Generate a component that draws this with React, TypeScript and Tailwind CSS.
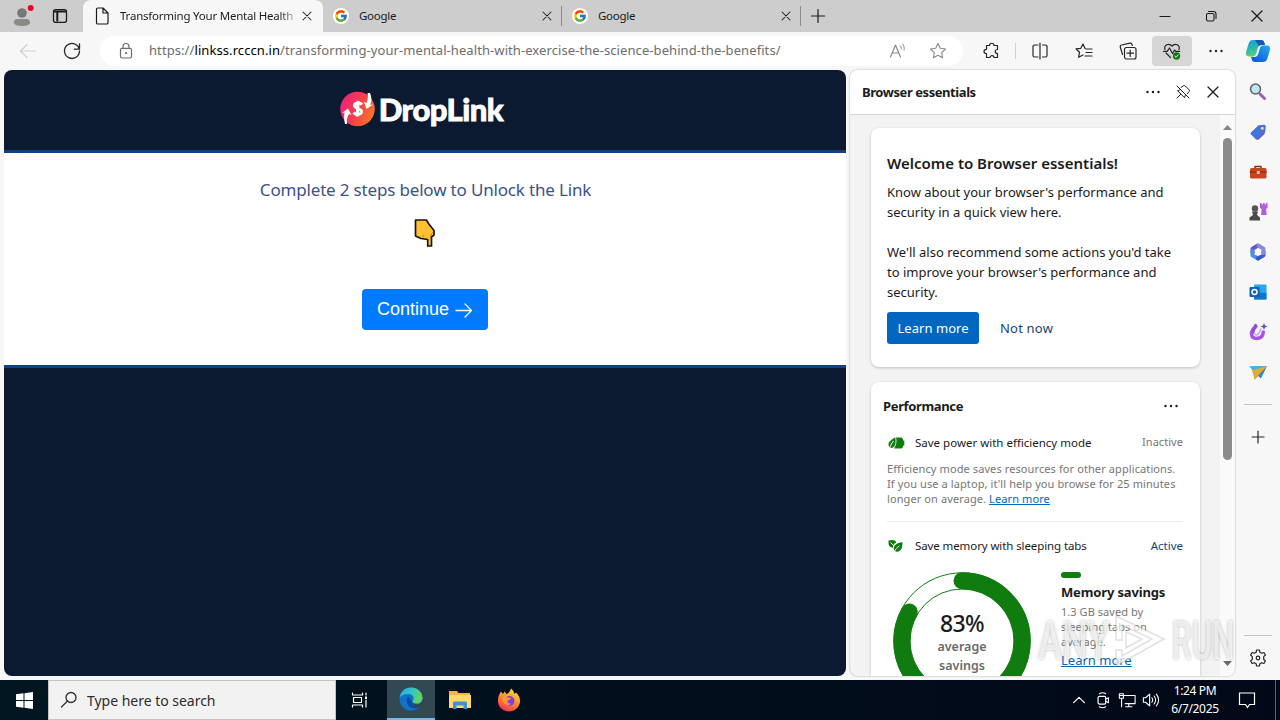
import type { ReactNode } from "react";
import { FcGoogle } from "react-icons/fc";

type IconProps = { size?: number; className?: string; children: ReactNode };

function Icon({ size = 20, className = "", children }: IconProps) {
  return (
    <svg
      width={size}
      height={size}
      viewBox="0 0 20 20"
      fill="none"
      stroke="currentColor"
      strokeLinecap="round"
      strokeLinejoin="round"
      className={`shrink-0 ${className}`}
    >
      {children}
    </svg>
  );
}

function Close({ size = 20 }: { size?: number }) {
  return (
    <Icon size={size}>
      <path d="M5 5l10 10M15 5L5 15" strokeWidth="1.3" />
    </Icon>
  );
}

function Dots() {
  return (
    <Icon>
      <g fill="currentColor" stroke="none">
        <circle cx="4.5" cy="10" r="1.2" />
        <circle cx="10" cy="10" r="1.2" />
        <circle cx="15.5" cy="10" r="1.2" />
      </g>
    </Icon>
  );
}

function GoogleTab() {
  return (
    <div className="flex h-8 w-[239px] shrink-0 items-center pl-[10px]">
      <span className="flex size-4 items-center justify-center rounded-full bg-white">
        <FcGoogle size={14} />
      </span>
      <span className="ml-[10px] w-[180px] text-[11.5px] tracking-[-0.25px]">Google</span>
      <Close size={16} />
      <span className="ml-[6px] h-5 w-px bg-[#8c8c8c]" />
    </div>
  );
}

function TabBar() {
  return (
    <div className="flex h-8 items-center bg-[#cdcdcd] text-[#1b1b1b]">
      <div className="flex h-8 w-[83px] items-center">
        <span className="ml-3 flex size-5 items-center justify-center">
          <svg width="24" height="24" viewBox="0 0 24 24" className="shrink-0">
            <circle cx="12" cy="9" r="4.8" fill="#777" />
            <path d="M4 18.500c0-2.500 1.400-3.500 3-3.500h10c1.600 0 3 1 3 3.500 0 2.600-4 3.500-8 3.500s-8-.9-8-3.500z" fill="#8d8985" />
            <circle cx="20.700" cy="4" r="3" fill="#e00b1c" />
          </svg>
        </span>
        <Icon className="ml-[18px]">
          <rect x="3.500" y="3.700" width="13" height="12.600" rx="2" strokeWidth="1.300" />
          <path d="M4 5.500h12M7.300 6.500v9" strokeWidth="2" strokeLinecap="butt" />
        </Icon>
      </div>
      <div className="flex h-8 w-[240px] items-center rounded-t-lg bg-[#f7f7f7] pl-[9px]">
        <Icon>
          <path d="M4.500 3.300c0-.8.6-1.300 1.300-1.300H11l5 5v9.700c0 .8-.6 1.300-1.300 1.300H5.800c-.7 0-1.300-.5-1.300-1.300zM11 2v5h5" strokeWidth="1.200" />
        </Icon>
        <span className="ml-2 w-[174px] overflow-hidden whitespace-nowrap bg-linear-to-r from-[#1b1b1b] from-92% to-[#bbbbbb] bg-clip-text text-[11.5px] tracking-[-0.22px] text-transparent">
          Transforming Your Mental Health
        </span>
        <span className="ml-[5px]">
          <Close size={16} />
        </span>
      </div>
      <GoogleTab />
      <GoogleTab />
      <Icon className="ml-[7px]">
        <path d="M10 3.500v13M3.500 10h13" strokeWidth="1.200" />
      </Icon>
      <div className="ml-auto flex">
        <span className="flex w-[46px] justify-center">
          <Icon>
            <path d="M5 10.500h10" strokeWidth="1.100" />
          </Icon>
        </span>
        <span className="flex w-[46px] justify-center">
          <Icon>
            <rect x="5.500" y="7.500" width="7.500" height="7.500" rx="1.500" strokeWidth="1.100" />
            <path d="M7.500 5.500h5a2.500 2.500 0 0 1 2.500 2.500v4.500" strokeWidth="1.100" />
          </Icon>
        </span>
        <span className="flex w-[46px] justify-center">
          <Close />
        </span>
      </div>
    </div>
  );
}

function CopilotLogo() {
  return (
    <svg width="26" height="24" viewBox="0 0 26 24" className="shrink-0">
      <defs>
        <linearGradient id="cpA" x1="0" y1="0" x2="0.300" y2="1">
          <stop offset="0" stopColor="#1a9bd8" />
          <stop offset="0.500" stopColor="#27b4b4" />
          <stop offset="1" stopColor="#5bd07c" />
        </linearGradient>
        <linearGradient id="cpB" x1="1" y1="0" x2="0" y2="1">
          <stop offset="0" stopColor="#1fb0f0" />
          <stop offset="0.600" stopColor="#1672e0" />
          <stop offset="1" stopColor="#0f58c8" />
        </linearGradient>
      </defs>
      <path d="M8 1h8c2 0 2.800 1 3.300 2.700L20 6h-3.500c-2 0-3 1-3.700 3l-1.700 6c-.6 1.600-1.500 2.500-3.300 2.500H4C1 17.500.4 15 1.300 12.300l2.400-8C4.400 2.200 5.800 1 8 1z" fill="url(#cpA)" />
      <path d="M18 23h-8c-2 0-2.800-1-3.300-2.700L6 18h3.500c2 0 3-1 3.700-3l1.700-6c.6-1.600 1.500-2.500 3.300-2.500H22c3 0 3.600 2.500 2.700 5.200l-2.400 8C21.600 21.800 20.200 23 18 23z" fill="url(#cpB)" />
      <path d="M10 1h6c2 0 2.800 1 3.300 2.700L20 6h-3.500c-1 0-1.800.3-2.500 1z" fill="#1458b8" />
    </svg>
  );
}

function Toolbar() {
  return (
    <div className="flex h-[38px] items-center bg-[#f7f7f7] text-[#262626]">
      <span className="flex w-14 justify-center text-[#cfcfcf]">
        <Icon>
          <path d="M17.500 10H2.500M9 3.500L2.500 10 9 16.500" strokeWidth="1.100" />
        </Icon>
      </span>
      <span className="flex w-8 justify-center">
        <Icon>
          <path d="M17.300 8.200A7.500 7.500 0 1 0 17.500 10M17.500 3v5.200h-5.200" strokeWidth="1.300" />
        </Icon>
      </span>
      <div className="ml-3 flex h-[30px] w-[863px] items-center rounded-full bg-white text-[#6d6d6d]">
        <Icon className="ml-4">
          <rect x="4.500" y="7.300" width="11" height="9.700" rx="1.500" strokeWidth="1.200" />
          <path d="M7 7V5.500a3 3 0 0 1 6 0V7" strokeWidth="1.200" />
          <circle cx="10" cy="12" r="0.600" fill="currentColor" />
        </Icon>
        <span className="ml-[13px] whitespace-nowrap text-[13px] tracking-[0.08px]">
          https://<span className="text-black">linkss.rcccn.in</span>/transforming-your-mental-health-with-exercise-the-science-behind-the-benefits/
        </span>
        <span className="ml-auto flex gap-5 pr-[15px] text-[#8a8a8a]">
          <Icon>
            <path d="M2.500 16L7.500 4l5 12M4.300 12h6.400" strokeWidth="1.200" />
            <path d="M12 4.500c1 .8 1.500 2 1.300 3.500M14.500 3c1.500 1.500 2 3.500 1.600 6" strokeWidth="1" />
          </Icon>
          <Icon>
            <path d="M10 2.500l2.300 4.800 5.200.7-3.800 3.600.9 5.200-4.600-2.500-4.600 2.500.9-5.200L2.500 8l5.200-.7z" strokeWidth="1.100" />
          </Icon>
        </span>
      </div>
      <span className="ml-[7px] flex w-11 justify-center">
        <Icon>
          <path d="M7.500 4.500c0-3 4.500-3 4.500 0h3.500v4c-3 0-3 4 0 4v4H12c0-2.500-4-2.500-4 0H4.500V12.500c-3.300 0-3.300-4.200 0-4.200V4.500z" strokeWidth="1.200" />
        </Icon>
      </span>
      <span className="mr-[2px] ml-[1px] h-4 w-px bg-[#d0d0d0]" />
      <span className="flex w-11 justify-center">
        <Icon>
          <path d="M8 4H4.500A1.500 1.500 0 0 0 3 5.500v9A1.500 1.500 0 0 0 4.500 16H8M12.500 4h3A1.500 1.500 0 0 1 17 5.500v9a1.500 1.500 0 0 1-1.500 1.500h-3M10 2v16" strokeWidth="1.200" />
        </Icon>
      </span>
      <span className="flex w-11 justify-center">
        <Icon>
          <path d="M11 7.500L9 3 6.800 7.300l-4.800.6 3.500 3.400-.9 5L9 14M12 8h6M12 11.500h6M11 15h7" strokeWidth="1.200" />
        </Icon>
      </span>
      <span className="flex w-11 justify-center">
        <Icon>
          <rect x="6.500" y="6.500" width="11.500" height="11.500" rx="2" strokeWidth="1.200" />
          <path d="M12.200 9v6.500M9 12.200h6.500M4.500 13.500L2.300 6.300A1.800 1.800 0 0 1 3.500 4L12 2.200a1.800 1.800 0 0 1 2 1.300l.3 1" strokeWidth="1.200" />
        </Icon>
      </span>
      <span className="ml-[2px] flex h-[30px] w-10 items-center justify-center rounded bg-[#d6d6d6]">
        <Icon>
          <path d="M3 8.500C1.500 4 7 1.500 10 5c3-3.500 8.500-1 7 3.500M4 12l4.500 4.500M1.500 10.300h3.700L7.500 7l3 5.500 2-3.500 1.200 1.400h4" strokeWidth="1.200" />
          <circle cx="14.500" cy="15" r="3.700" fill="#107c10" stroke="none" />
          <path d="M12.900 15.200l1.100 1.100 2.200-2.400" stroke="#fff" strokeWidth="0.900" />
        </Icon>
      </span>
      <span className="flex w-12 justify-center">
        <Dots />
      </span>
      <span className="flex w-9 justify-center">
        <CopilotLogo />
      </span>
    </div>
  );
}

function DropLinkLogo() {
  return (
    <div className="flex items-center">
      <svg width="36" height="36" viewBox="0 0 36 36">
        <defs>
          <linearGradient id="drop" x1="0" y1="0.300" x2="1" y2="0.700">
            <stop offset="0" stopColor="#f0207c" />
            <stop offset="0.500" stopColor="#f5404c" />
            <stop offset="1" stopColor="#f77a20" />
          </linearGradient>
        </defs>
        <circle cx="17.500" cy="18" r="17.300" fill="url(#drop)" />
        <path d="M5 33c-1-5-1.200-8-.5-11.500L2 22l6-4.500 3.500 6.500-2.500-1C7 26 6.500 29 7 33z" fill="#fff" />
        <path d="M30 2c1.800 4 1.800 8 .3 12l2.700-.5-6.500 4.500-2.500-7 2.500 1c1.200-3 2-6 1-10z" fill="#fff" />
        <path d="M22 13.500c-2-2.500-7.500-2-7.500 1 0 3.400 7 2.700 7 6.200 0 3-5.700 3.500-8 1M18.300 10L17 25.500" fill="none" stroke="#fff" strokeWidth="3" />
      </svg>
      <span className="ml-[3px] font-['Lato','Open_Sans',sans-serif] text-[31px] leading-9 font-black tracking-[-0.5px] text-white [-webkit-text-stroke:0.8px_#fff]">
        DropLink
      </span>
    </div>
  );
}

function WebPage() {
  return (
    <div className="flex w-[842px] flex-col overflow-hidden rounded-lg bg-[#0b1931]">
      <div className="flex h-[83px] items-center justify-center border-b-[3px] border-[#0d4380] pr-[7px] pb-[2px]">
        <DropLinkLogo />
      </div>
      <div className="flex h-[215px] flex-col items-center border-b-[3px] border-[#0d4380] bg-white">
        <p className="mt-6 pl-px text-[17px] leading-[26px] tracking-[-0.17px] whitespace-nowrap text-[#3b5386]">
          Complete 2 steps below to Unlock the Link
        </p>
        <svg width="22" height="28" viewBox="0 0 22 28" className="mt-[16px]">
          <path d="M1.500 1H12.500l2 3.500 5.500 7v4.500l-2.500 2V27h-3.800V20.500L7 19.500 1.500 17z" fill="#ffc132" stroke="#151515" strokeWidth="1.700" strokeLinejoin="round" />
          <path d="M9 15.500v3.500M16 17.500l2.500-4" fill="none" stroke="#c98a17" strokeWidth="1" />
        </svg>
        <button className="mt-[42px] flex h-[41px] w-[126px] items-center rounded bg-[#007bff] pl-[15px] font-['Liberation_Sans',Arial,sans-serif] text-[18px] text-white">
          Continue
          <Icon className="ml-[5px]">
            <path d="M2 10.500h15.500M11 4l6.500 6.500-6.500 6.500" strokeWidth="1.300" />
          </Icon>
        </button>
      </div>
    </div>
  );
}

function EfficiencyIcon() {
  return (
    <svg width="18" height="14" viewBox="0 0 18 14" className="shrink-0">
      <path d="M9 1.500h5.500L16 3v1.500h1.300v5H16V11l-1.500 1.500H7C9.500 9 10 5 9 1.500z" fill="#107c10" />
      <path d="M8.200 1.200C9.200 6 8.500 10 6 11.500c-2 1-4.500 0-4.500-3C1.500 5 4.700 4 8.200 1.200z" fill="#107c10" />
      <path d="M2.500 12.800C3.500 9.500 4.500 7.500 6.500 5" stroke="#fff" strokeWidth="1" fill="none" />
    </svg>
  );
}

function LeafIcon() {
  return (
    <svg width="16" height="14" viewBox="0 0 16 14" className="shrink-0">
      <path d="M1.500 1.500C5 .7 8.500.5 9.200 3.500 7 4.500 6 6 6 8.800 2 8.500 1.300 5.500 1.500 1.500z" fill="#107c10" />
      <path d="M15.300 3c.5 5-.8 9-4.800 9.700-4 .3-5-4.700-2-7C10 4 13 4 15.300 3z" fill="#107c10" />
      <path d="M3.500 3.500L7 7M7.200 13C8.500 10 10 8.500 12.500 6.800" stroke="#fff" strokeWidth="0.900" fill="none" />
    </svg>
  );
}

function WelcomeCard() {
  return (
    <div className="h-[239px] rounded-lg bg-white px-4 pt-6 text-[#1b1b1b] shadow-[0_1px_3px_rgba(0,0,0,0.22)]">
      <h2 className="text-[15px] leading-[22px] font-semibold">Welcome to Browser essentials!</h2>
      <p className="mt-2 text-[13px] leading-5 whitespace-nowrap">
        Know about your browser's performance and
        <br />
        security in a quick view here.
      </p>
      <p className="mt-5 text-[13px] leading-5 whitespace-nowrap">
        We'll also recommend some actions you'd take
        <br />
        to improve your browser's performance and
        <br />
        security.
      </p>
      <div className="mt-[10px] flex items-center text-[13px]">
        <button className="h-8 w-[92px] rounded-[3px] bg-[#0067c0] pt-[2px] tracking-[0.05px] text-white">Learn more</button>
        <button className="ml-[21px] pt-[2px] tracking-[0.2px] text-[#173f78]">Not now</button>
      </div>
    </div>
  );
}

function SavingsRing() {
  return (
    <svg width="138" height="138" viewBox="0 0 138 138" fill="none" stroke="#107c10">
      <circle cx="69" cy="69" r="68.200" strokeWidth="1" />
      <circle cx="69" cy="69" r="52" strokeWidth="1" />
      <circle cx="69" cy="69" r="60.200" strokeWidth="17" strokeLinecap="round" pathLength="100" strokeDasharray="83 100" transform="rotate(-90 69 69)" />
    </svg>
  );
}

function PerformanceCard() {
  return (
    <div className="mt-[15px] h-[340px] rounded-lg bg-white pt-[14px] text-[#1b1b1b] shadow-[0_1px_3px_rgba(0,0,0,0.22)]">
      <div className="flex h-5 items-center justify-between pr-[19px] pl-3">
        <h2 className="pt-[2px] text-[13px] font-bold tracking-[-0.35px]">Performance</h2>
        <Dots />
      </div>
      <div className="mr-[17px] ml-4 border-b border-[#ececec] pt-[19px] pb-[15px]">
        <div className="flex h-4 items-center text-[11.5px] whitespace-nowrap">
          <EfficiencyIcon />
          <span className="ml-[10px]">Save power with efficiency mode</span>
          <span className="ml-auto pb-[2px] text-[11px] tracking-[0.05px] text-[#767676]">Inactive</span>
        </div>
        <p className="mt-[10px] text-[11px] leading-[15px] tracking-[0.1px] whitespace-nowrap text-[#767676]">
          Efficiency mode saves resources for other applications.
          <br />
          If you use a laptop, it'll help you browse for 25 minutes
          <br />
          longer on average. <a className="text-[#0067b8] underline">Learn more</a>
        </p>
      </div>
      <div className="mt-4 mr-[17px] ml-4 flex h-4 items-center text-[11.5px] whitespace-nowrap">
        <LeafIcon />
        <span className="ml-3 tracking-[-0.1px]">Save memory with sleeping tabs</span>
        <span className="ml-auto text-[#173f78]">Active</span>
      </div>
      <div className="mt-[18px] flex pl-[22px]">
        <div className="grid *:col-start-1 *:row-start-1">
          <SavingsRing />
          <div className="pt-[37px] text-center">
            <div className="text-[23px] leading-7 font-medium tracking-[-0.7px]">83%</div>
            <div className="text-[12.5px] leading-[19px] font-semibold text-[#6a6a6a]">
              average
              <br />
              savings
            </div>
          </div>
        </div>
        <div className="ml-[30px] whitespace-nowrap">
          <div className="h-[6px] w-5 rounded-full bg-[#107c10]" />
          <h3 className="mt-1 text-[13px] leading-5 font-bold tracking-[-0.15px]">Memory savings</h3>
          <p className="mt-[2px] text-[11px] leading-[15px] tracking-[0.05px] text-[#767676]">
            1.3 GB saved by
            <br />
            sleeping tabs on
            <br />
            average.
          </p>
          <a className="mt-[2px] block text-[13px] leading-[18px] text-[#0067b8] underline">Learn more</a>
        </div>
      </div>
    </div>
  );
}

function EssentialsPanel() {
  return (
    <div className="ml-1 flex w-[385px] flex-col overflow-hidden rounded-lg bg-[#f3f3f3] shadow-[0_0_2px_rgba(0,0,0,0.350)]">
      <div className="flex h-[45px] shrink-0 items-center border-b border-[#d4d4d4] bg-white pl-3 text-[#1b1b1b]">
        <h1 className="w-[281px] pt-[2px] text-[13px] font-bold tracking-[-0.43px]">Browser essentials</h1>
        <Dots />
        <Icon className="ml-[10px]">
          <path d="M4 4l12 12M8 5.500l2.500-1.800c.6-.4 1.200-.3 1.700.2l4 4c.5.500.5 1.200 0 1.700l-2 2.200M6.500 8L4.500 8.700l7 7 .8-2.200M7.700 12.300L4 16" strokeWidth="1" />
        </Icon>
        <span className="ml-[10px]">
          <Close />
        </span>
      </div>
      <div className="flex min-h-0 flex-1">
        <div className="min-w-0 flex-1 overflow-hidden pt-[13px] pr-5 pl-[21px]">
          <WelcomeCard />
          <PerformanceCard />
        </div>
        <div className="flex w-[15px] flex-col items-center bg-[#fafafa] py-[10px]">
          <svg width="9" height="5" viewBox="0 0 9 5">
            <path d="M0 5l4.500-5L9 5z" fill="#858585" />
          </svg>
          <span className="mt-2 h-[322px] w-[9px] rounded-full bg-[#8b8b8b]" />
          <svg width="9" height="5" viewBox="0 0 9 5" className="mt-auto">
            <path d="M0 0l4.500 5L9 0z" fill="#6b6b6b" />
          </svg>
        </div>
      </div>
    </div>
  );
}

function SideBar() {
  return (
    <div className="ml-auto flex w-[45px] flex-col items-center">
      <div className="flex flex-col gap-5 pt-3">
        <Icon>
          <path d="M12 12l4.500 4.500" stroke="#a35bc4" strokeWidth="3" />
          <circle cx="7.500" cy="7" r="5" fill="#bfe5f7" stroke="#626262" strokeWidth="1.500" />
        </Icon>
        <Icon>
          <path d="M3 10.500l7.500-7.300 6-.4 1.300 1-.5 5.700-7.500 7.700c-.7.6-1.400.6-2 0L3 12.500c-.6-.7-.6-1.400 0-2z" fill="#4473dc" stroke="none" />
          <path d="M9 17.500l8-8-.5 2.500-6.500 6z" fill="#7142c9" stroke="none" />
          <circle cx="14.300" cy="6.200" r="1.500" fill="#ffd95c" stroke="none" />
        </Icon>
        <Icon>
          <path d="M7 6.500V4.500h6v2" stroke="#7c341d" strokeWidth="1.500" />
          <rect x="2" y="6" width="16.500" height="10.500" rx="1.500" fill="#c9441d" stroke="none" />
          <path d="M2 10h16.500" stroke="#7c2a12" strokeWidth="1.200" />
          <rect x="8.800" y="9" width="3" height="3" fill="#e7c1a5" stroke="none" />
        </Icon>
        <Icon>
          <path d="M12 1h1.700v1.500H15V1h1.700v1.500H18V1h1.500v5l-1.500 1 .7 6H13l.7-6L12 6z" fill="#b65bd9" stroke="none" />
          <circle cx="7" cy="6.500" r="3.200" fill="#555" stroke="none" />
          <path d="M4 9.500h6L9 13l3 2.500v3H1.500v-3L5 13z" fill="#4a4a4a" stroke="none" />
        </Icon>
        <Icon>
          <path d="M10 3.500l-5.500 3.200v3.500" stroke="#6256c8" strokeWidth="4" />
          <path d="M4.500 9v4.300L10 16.500" stroke="#4a8fe0" strokeWidth="4" />
          <path d="M10 16.500l5.500-3.200V10" stroke="#315dc4" strokeWidth="4" />
          <path d="M15.500 11V6.700L10.500 3.800" stroke="#8b8ad8" strokeWidth="4" />
        </Icon>
        <Icon>
          <rect x="6" y="2.500" width="12.500" height="15" rx="1" fill="#28a8e8" stroke="none" />
          <path d="M6 10l12.500 1v6.500H6z" fill="#1277c8" stroke="none" />
          <rect x="1.500" y="5" width="10" height="10" rx="1" fill="#0f62b5" stroke="none" />
          <circle cx="6.500" cy="10" r="2.500" stroke="#fff" strokeWidth="1.500" />
        </Icon>
        <Icon>
          <path d="M8 4.500C1.500 9 2.500 16.500 8.500 16.500c4.500 0 6.500-3 6.800-6.500" stroke="#a855e6" strokeWidth="3.500" />
          <path d="M7.500 3L5 10.500" stroke="#8a4fd8" strokeWidth="2.500" />
          <path d="M7 12c.5 1.500 2.500 1.500 4-1l2-4" stroke="#cf9af0" strokeWidth="1.500" />
          <path d="M16 1l.9 2.600L19.500 4.500l-2.600.9-.9 2.600-.9-2.600L12.500 4.500l2.600-.9z" fill="#5b44c4" stroke="none" />
        </Icon>
        <Icon>
          <path d="M1.500 4.500L19 4 8 12z" fill="#27a0d8" stroke="none" />
          <path d="M1.500 4.500L19 4 6 8.500z" fill="#3fb4e6" stroke="none" />
          <path d="M19 4L6.500 11.500v6L10 14l3 2.500z" fill="#2b87d8" stroke="none" />
          <path d="M19 4L4 8.500l2.500 9z" fill="#e5ac30" stroke="none" />
        </Icon>
      </div>
      <span className="mt-[22px] h-px w-7 bg-[#c2c2c2]" />
      <Icon className="mt-[22px] text-[#262626]">
        <path d="M10 4v12M4 10h12" strokeWidth="1.200" />
      </Icon>
      <span className="mt-auto h-px w-7 bg-[#c2c2c2]" />
      <Icon className="mt-3 mb-2 text-[#262626]">
        <path d="M8.600 2h2.800l.5 2.300 1.800 1 2.200-.8 1.500 2.500-1.700 1.600v2.800l1.700 1.600-1.500 2.500-2.200-.8-1.800 1-.5 2.300H8.600l-.5-2.300-1.800-1-2.200.8L2.600 13l1.700-1.600V8.600L2.600 7l1.500-2.500 2.200.8 1.800-1z" strokeWidth="1.200" />
        <circle cx="10" cy="10" r="1.800" strokeWidth="1.200" />
      </Icon>
    </div>
  );
}

function EdgeLogo() {
  return (
    <svg width="24" height="24" viewBox="0 0 24 24">
      <defs>
        <linearGradient id="edgeTop" x1="0" y1="0" x2="1" y2="0.400">
          <stop offset="0" stopColor="#2ba6e0" />
          <stop offset="0.500" stopColor="#2fc3d0" />
          <stop offset="1" stopColor="#62d65a" />
        </linearGradient>
      </defs>
      <circle cx="12" cy="12" r="11.500" fill="#1173c7" />
      <path d="M.6 11C1.500 4.500 6 .5 12 .5c7 0 11.500 5 11.500 10 0 4-3 6-6 6-2.500 0-4-1-4-2 0-.8 1.200-1.500 1.200-3.500 0-2-2-4-5-4C5.500 7 1.800 8.500.6 11z" fill="url(#edgeTop)" />
      <path d="M9 9.500C6 13 8 20.500 15 21.500c2.500.2 5-1 6.500-3-5 2-10-.5-8.500-4.500z" fill="#0c4c9c" />
      <path d="M13.500 14.500c0 1.500 1.500 2.800 4 2.800 2.500 0 4-.8 5.300-2.300l1.200 2.500-2 2c-4 1.500-9-.5-8.500-5z" fill="#32464e" />
    </svg>
  );
}

function FirefoxLogo() {
  return (
    <svg width="24" height="24" viewBox="0 0 24 24">
      <defs>
        <linearGradient id="fox" x1="0.800" y1="0" x2="0.300" y2="1">
          <stop offset="0" stopColor="#ffe14a" />
          <stop offset="0.450" stopColor="#ff9a28" />
          <stop offset="1" stopColor="#f52f55" />
        </linearGradient>
      </defs>
      <path d="M2.500 6L4 3.500 6 6l1.500-2.500L9.500 6C12 5 13 3.500 14 .5c2 1.500 3 3.500 3.500 5.500L19 4.500c3 3 4.500 6 4 9.500-.8 5.500-5.500 9.500-11 9.500S1.500 19.500 1 14c-.2-3 .3-5.500 1.500-8z" fill="url(#fox)" />
      <circle cx="12.500" cy="13" r="5" fill="#7d42d6" />
      <path d="M5 10c2-1.500 4-1.500 6-.5l3 .5c-.5 2-2 2-3.500 2.500C10 15 12 16 14 15.500 12 19 6 17.500 5 10z" fill="#ff9530" />
    </svg>
  );
}

function TaskBar() {
  return (
    <div className="flex h-10 items-center bg-linear-to-r from-[#001620] to-[#020817] text-white">
      <span className="flex w-12 justify-center">
        <svg width="17" height="17" viewBox="0 0 17 17" fill="#fff">
          <path d="M0 2.300l7.500-1V8H0zM8.500 1.200L17 0v8H8.500zM0 9h7.500v6.700l-7.500-1zM8.500 9H17v8l-8.500-1.200z" />
        </svg>
      </span>
      <div className="flex h-10 w-[288px] items-center border border-[#c4c4c4] bg-[#f2f2f2] pl-[10px] text-[#2c2c2c]">
        <Icon>
          <circle cx="12" cy="7.500" r="5" strokeWidth="1.300" />
          <path d="M8.500 11L2.500 17" strokeWidth="1.300" />
        </Icon>
        <span className="ml-2 text-[14px] tracking-[-0.02px]">Type here to search</span>
      </div>
      <span className="flex w-[51px] justify-center pr-[3px]">
        <Icon>
          <path d="M2.500 3v2h10V3M2.500 17v-2h10v2M3.500 7.500h8v5h-8zM16 3v2M16 10v7" strokeWidth="1.200" />
          <rect x="15" y="6.500" width="2" height="2.500" fill="#fff" stroke="none" />
        </Icon>
      </span>
      <span className="flex h-10 w-12 items-center justify-center border-b-2 border-[#76b9ed] bg-[#334951]">
        <EdgeLogo />
      </span>
      <span className="flex w-[49px] justify-center">
        <svg width="22" height="20" viewBox="0 0 22 20">
          <path d="M0 1h8l1.500 2H21v15H0z" fill="#f5b73c" />
          <path d="M1.500 5H22v13H0V6.500z" fill="#ffd969" />
          <path d="M4 19v-6c0-1 .6-1.500 1.500-1.500h11c1 0 1.500.5 1.500 1.500v6h-3.500v-3.500h-7V19z" fill="#3b93d0" />
        </svg>
      </span>
      <span className="flex w-[49px] justify-center">
        <FirefoxLogo />
      </span>
      <div className="ml-auto flex items-center">
        <Icon size={18} className="mr-[6px]">
          <path d="M4 13l6-6 6 6" strokeWidth="1.300" />
        </Icon>
        <Icon size={18} className="mr-[6px]">
          <rect x="4.500" y="6" width="8.500" height="8.500" rx="1.500" strokeWidth="1.300" />
          <path d="M13 9l3-1.500v5.500L13 11.500M6 3c2-1.300 5-1.300 7 0M6 17.500c2 1.300 5 1.300 7 0" strokeWidth="1.200" />
        </Icon>
        <Icon size={18} className="mr-[6px]">
          <path d="M6 5h13v9H8M12 14v3.500M8.500 17.500h7M4 9v8.500M1.500 3h4.500v5H1.500zM2.500 5h2.500" strokeWidth="1.200" />
        </Icon>
        <Icon size={18} className="mr-[10px]">
          <path d="M1.500 7.500H4L8.500 3.500v13L4 12.500H1.500zM11 7.500c1 1.500 1 3.500 0 5M13.500 5.500c2 2.800 2 6.200 0 9M16 3.500c3 4 3 9 0 13" strokeWidth="1.200" />
        </Icon>
        <div className="w-[50px] text-center text-[12px] leading-[18px] tracking-[-0.35px] whitespace-nowrap">
          1:24 PM
          <br />
          6/7/2025
        </div>
        <Icon className="mr-[18px] ml-[17px]">
          <path d="M2.500 3h15v11.500H12.500L10.500 17.500 8.500 14.500h-6z" strokeWidth="1.200" strokeLinejoin="miter" />
        </Icon>
        <span className="mr-[4px] h-10 w-px bg-[#5c626c]" />
      </div>
    </div>
  );
}

function Watermark() {
  return (
    <div className="pointer-events-none absolute top-[614px] left-[1038px] flex h-[54px] w-[196px] items-center justify-between font-['Roboto',sans-serif] text-[54px] leading-none font-medium text-white/70 [text-shadow:0_0_4px_rgba(70,70,70,0.4)]">
      <span className="w-[72px] origin-left scale-x-[0.670]">ANY</span>
      <svg width="52" height="54" viewBox="0 0 52 54" fill="rgba(255,255,255,0.65)" stroke="rgba(120,120,120,0.22)" strokeWidth="1.500">
        <path d="M1 2l48 23L1 52V36h6v6l30-17L7 11v15H1z" />
        <path d="M11 18l16 7-16 9z" />
      </svg>
      <span className="w-[62px] origin-left scale-x-[0.580]">RUN</span>
    </div>
  );
}

export default function App() {
  return (
    <div className="relative flex h-[720px] w-[1280px] flex-col overflow-hidden bg-[#f7f7f7] font-['Noto_Sans','Open_Sans',sans-serif]">
      <TabBar />
      <Toolbar />
      <div className="flex h-[610px] pb-1 pl-1">
        <WebPage />
        <EssentialsPanel />
        <SideBar />
      </div>
      <TaskBar />
      <Watermark />
    </div>
  );
}
